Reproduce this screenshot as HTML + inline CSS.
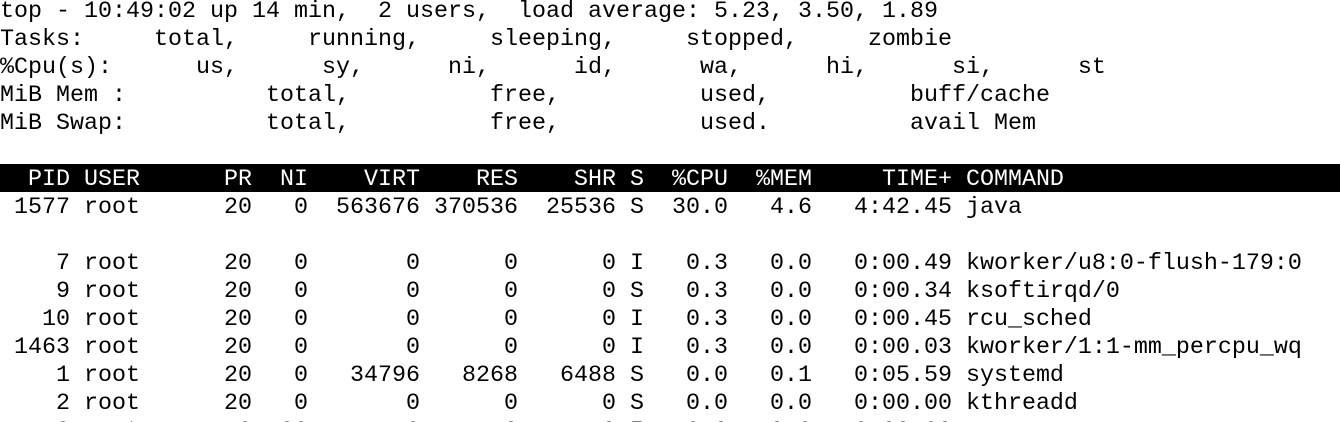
<!DOCTYPE html>
<html><head><meta charset="utf-8"><style>
html,body{margin:0;padding:0;background:#fff;width:1340px;height:422px;overflow:hidden;position:relative}
.bar{position:absolute;left:0;top:164px;width:1340px;height:28px;background:#000}
pre{position:absolute;left:0;top:-2px;margin:0;height:424px;overflow:hidden;font-family:"Liberation Mono","DejaVu Sans Mono",monospace;font-size:23.33px;line-height:28px;color:#000;white-space:pre}
.w{color:#fff}
</style></head><body>
<div class="bar"></div>
<pre>top - 10:49:02 up 14 min,  2 users,  load average: 5.23, 3.50, 1.89
Tasks:     total,     running,     sleeping,     stopped,     zombie
%Cpu(s):      us,      sy,      ni,      id,      wa,      hi,      si,      st
MiB Mem :          total,          free,          used,          buff/cache
MiB Swap:          total,          free,          used.          avail Mem

<span class="w">  PID USER      PR  NI    VIRT    RES    SHR S  %CPU  %MEM     TIME+ COMMAND</span>
 1577 root      20   0  563676 370536  25536 S  30.0   4.6   4:42.45 java

    7 root      20   0       0      0      0 I   0.3   0.0   0:00.49 kworker/u8:0-flush-179:0
    9 root      20   0       0      0      0 S   0.3   0.0   0:00.34 ksoftirqd/0
   10 root      20   0       0      0      0 I   0.3   0.0   0:00.45 rcu_sched
 1463 root      20   0       0      0      0 I   0.3   0.0   0:00.03 kworker/1:1-mm_percpu_wq
    1 root      20   0   34796   8268   6488 S   0.0   0.1   0:05.59 systemd
    2 root      20   0       0      0      0 S   0.0   0.0   0:00.00 kthreadd
    3 root       0 -20       0      0      0 I   0.0   0.0   0:00.00 </pre>
</body></html>
